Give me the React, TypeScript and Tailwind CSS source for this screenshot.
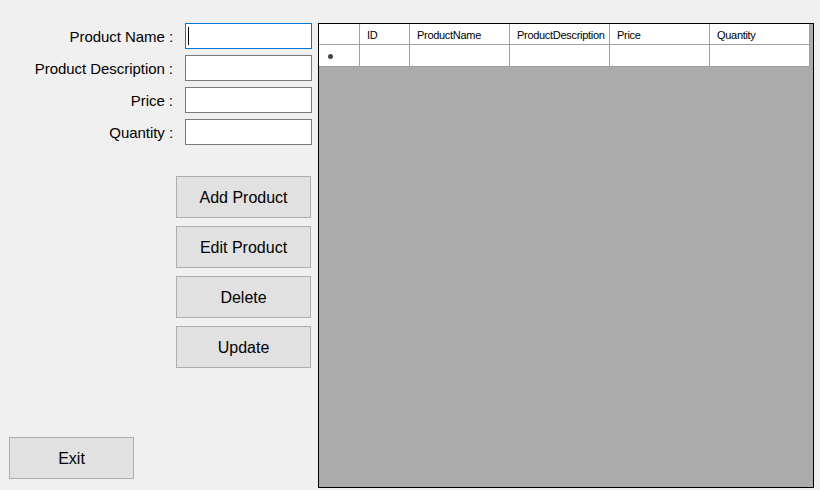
import React from "react";

const font = { fontFamily: '"Liberation Sans", Arial, sans-serif' };

function Field({ label, focused }: { label: string; focused?: boolean }) {
  return (
    <div className="flex items-center h-[26px]">
      <div className="w-[174px] text-right text-[15px] text-black pr-[1px] pt-[3px] whitespace-nowrap tracking-[-0.05px]">{label}</div>
      <div
        className={
          "ml-[11px] w-[127px] h-[26px] bg-white border flex items-center " +
          (focused ? "border-[#0078d7]" : "border-[#7a7a7a]")
        }
      >
        {focused && <div className="ml-[2px] w-[1px] h-[18px] bg-black" />}
      </div>
    </div>
  );
}

function Btn({ label, className }: { label: string; className?: string }) {
  return (
    <div
      className={
        "h-[42px] bg-[#e1e1e1] border border-[#adadad] flex items-center justify-center text-[16px] text-black pt-[2px] " +
        (className || "")
      }
    >
      {label}
    </div>
  );
}

export default function App() {
  const cols = [
    { name: "ID", w: "w-[50px]" },
    { name: "ProductName", w: "w-[100px]" },
    { name: "ProductDescription", w: "w-[100px]" },
    { name: "Price", w: "w-[100px]" },
    { name: "Quantity", w: "w-[100px]" },
  ];
  return (
    <div className="w-[820px] h-[490px] bg-[#f0f0f0] flex overflow-hidden" style={font}>
      <div className="w-[318px] flex flex-col pt-[23px] pb-[11px]">
        <div className="flex flex-col gap-[6px]">
          <Field label="Product Name :" focused />
          <Field label="Product Description :" />
          <Field label="Price :" />
          <Field label="Quantity :" />
        </div>
        <div className="flex flex-col gap-[8px] ml-[176px] mt-[31px] w-[135px]">
          <Btn label="Add Product" />
          <Btn label="Edit Product" />
          <Btn label="Delete" />
          <Btn label="Update" />
        </div>
        <Btn label="Exit" className="mt-auto ml-[9px] w-[125px]" />
      </div>
      <div className="mt-[23px] w-[496px] h-[465px] border border-black bg-[#ababab] flex flex-col">
        <div className="flex h-[21px] text-[11px] tracking-[-0.3px] text-black">
          <div className="w-[41px] bg-white border-r border-b border-[#a0a0a0]" />
          {cols.map((c) => (
            <div
              key={c.name}
              className={c.w + " bg-white border-r border-b border-[#a0a0a0] flex items-center pl-[7px] pt-[2px] whitespace-nowrap overflow-hidden"}
            >
              {c.name}
            </div>
          ))}
        </div>
        <div className="flex h-[22px]">
          <div className="w-[41px] bg-white border-r border-b border-[#a0a0a0] flex items-center pl-[9px]">
            <div className="w-[5px] h-[5px] rounded-full bg-[#444444] mt-[2px]" />
          </div>
          {cols.map((c) => (
            <div key={c.name} className={c.w + " bg-white border-r border-b border-[#a0a0a0]"} />
          ))}
        </div>
      </div>
    </div>
  );
}
